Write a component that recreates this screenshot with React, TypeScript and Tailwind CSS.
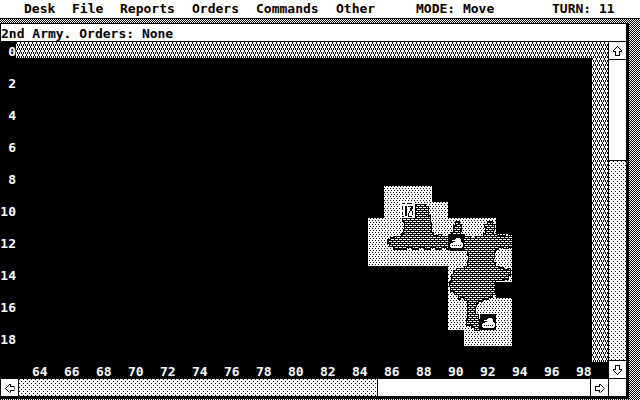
const mono = "font-['DejaVu_Sans_Mono','Liberation_Mono',monospace] text-[13px] font-bold";

const checker = "bg-[conic-gradient(#000_25%,#fff_0_50%,#000_0_75%,#fff_0)] bg-[length:2px_2px]";
const dots =
  "bg-white bg-[image:conic-gradient(from_270deg_at_1px_1px,#000_90deg,transparent_0),conic-gradient(from_270deg_at_1px_1px,#000_90deg,transparent_0)] bg-[size:4px_4px] bg-[position:0_0,2px_2px]";
const mesh =
  "bg-white bg-[image:conic-gradient(from_270deg_at_1px_2px,#000_90deg,transparent_0),conic-gradient(from_270deg_at_1px_2px,#000_90deg,transparent_0),conic-gradient(from_270deg_at_1px_2px,#000_90deg,transparent_0),conic-gradient(from_270deg_at_1px_2px,#000_90deg,transparent_0)] bg-[size:4px_8px,4px_8px,4px_4px,4px_4px] bg-[position:0_0,2px_4px,1px_2px,3px_2px]";

const menus = [
  { name: "Desk", width: "w-8" },
  { name: "File", width: "w-8" },
  { name: "Reports", width: "w-14" },
  { name: "Orders", width: "w-12" },
  { name: "Commands", width: "w-16" },
  { name: "Other", width: "w-10" },
];

const rows = Array.from({ length: 10 }, (_, i) => i * 2);
const columns = Array.from({ length: 18 }, (_, i) => 64 + i * 2);

function Arrow({ turn }: { turn: string }) {
  return (
    <svg viewBox="0 0 9 10" className={`h-[10px] w-[9px] ${turn}`} shapeRendering="crispEdges" aria-hidden="true">
      <path
        d="M4 0h1v1h-1zM3 1h1v1h-1zM5 1h1v1h-1zM2 2h1v1h-1zM6 2h1v1h-1zM1 3h1v1h-1zM7 3h1v1h-1zM0 4h1v1h-1zM8 4h1v1h-1zM0 5h3v1h-3zM6 5h3v1h-3zM2 6h1v3h-1zM6 6h1v3h-1zM2 9h5v1h-5z"
        fill="#000"
      />
    </svg>
  );
}

function ArrowButton({ label, turn = "" }: { label: string; turn?: string }) {
  return (
    <button type="button" aria-label={label} className="flex size-[17px] shrink-0 items-center justify-center bg-white">
      <Arrow turn={turn} />
    </button>
  );
}

function Tank({ x, y }: { x: number; y: number }) {
  return (
    <g transform={`translate(${x} ${y})`}>
      <rect width="16" height="16" fill="#000" />
      <path d="M8 4h4v1h1v3h1v1h1v4h-1v1H3v-1H2v-3h1V9h2V8h2V7H4V6h3V5h1z" fill="#fff" />
      <path d="M4 11h1v1h-1zM6 11h1v1h-1zM8 11h1v1h-1zM10 11h1v1h-1zM12 11h1v1h-1z" fill="#000" />
    </g>
  );
}

function TerrainMap() {
  return (
    <svg viewBox="368 186 144 160" className="h-40 w-36" shapeRendering="crispEdges" role="img" aria-label="Explored terrain">
      <defs>
        <pattern id="plain" width="3" height="4" patternUnits="userSpaceOnUse">
          <rect width="3" height="4" fill="#fff" />
          <path d="M0 0h1v1h-1zM1 2h1v1h-1z" />
        </pattern>
        <pattern id="rough" width="4" height="4" patternUnits="userSpaceOnUse">
          <rect width="4" height="4" />
          <path d="M1 1h3v1h-3zM0 3h2v1h-2zM3 3h1v1h-1z" fill="#fff" />
        </pattern>
      </defs>
      <path
        d="M384 186H432V202H448V218H496V234H512V282H496V298H512V346H464V330H448V266H368V218H384Z"
        fill="url(#plain)"
      />
      <path
        d="M415 204H425V206H428V215H430V222H431V232H433V235H438V234H441V236H448V235H451V232H453V225H455V221H459V224H461V231H460V234H464V236H470V238H475V236H483V233H485V227H484V224H487V221H492V224H494V230H493V234H497V235H505V236H508V234H512V247H508V248H503V247H498V249H495V252H494V258H493V262H495V266H499V267H503V269H507V268H510V275H508V279H503V280H495V294H492V297H488V299H482V301H478V303H476V306H475V314H478V319H479V330H474V327H471V325H466V319H467V300H464V297H460V299H458V294H454V291H450V286H449V281H451V274H453V270H456V268H464V266H467V260H468V255H467V250H450V249H446V247H441V249H435V247H430V249H424V247H418V249H412V247H406V249H397V249H393V246H389V243H387V239H390V237H394V236H401V233H403V229H404V221H402V218H415Z"
        fill="url(#rough)"
        stroke="#000"
        strokeWidth="1"
      />
      <rect x="400" y="202" width="15" height="16" fill="#fff" />
      <path d="M402 203h3v1h-3zM407 203h5v1h-5zM402 206h1v4h-1zM402 212h1v3h-1zM405 206h2v10h-2zM408 206h4v1h-4zM411 206h2v3h-2zM410 208h2v3h-2zM409 211h1v2h-1zM408 213h1v3h-1zM412 211h1v4h-1zM402 216h2v1h-2zM408 216h4v1h-4z" />
      <Tank x={448} y={234} />
      <Tank x={480} y={314} />
    </svg>
  );
}

export default function App() {
  return (
    <div className={`flex h-screen flex-col ${checker} ${mono} text-black`}>
      <header className="flex h-[19px] shrink-0 items-center border-b border-black bg-white px-6 leading-4">
        <nav className="flex gap-4" aria-label="Main menu">
          {menus.map((menu) => (
            <button key={menu.name} type="button" className={`${menu.width} text-left whitespace-nowrap`}>
              {menu.name}
            </button>
          ))}
        </nav>
        <span className="ml-10 whitespace-nowrap">MODE: Move</span>
        <span className="ml-auto w-16 whitespace-nowrap">TURN: 11</span>
      </header>

      <main className="mt-1 mr-[11px] mb-px flex min-h-0 flex-1 flex-col border-t border-r-[3px] border-b-[3px] border-l border-black bg-white">
        <h1 className="h-[18px] shrink-0 border-b border-black leading-[19px] whitespace-nowrap">2nd Army. Orders: None</h1>

        <div className="flex min-h-0 flex-1">
          <section className="grid min-w-0 flex-1 grid-cols-[15px_1fr_16px] grid-rows-[16px_1fr_16px] bg-black leading-4 text-white">
            <div className="row-span-3 flex flex-col gap-4">
              {rows.map((row) => (
                <span key={row} className="flex h-4 items-center justify-end pt-1 whitespace-nowrap">
                  {row}
                </span>
              ))}
            </div>
            <div className={`col-span-2 ${mesh}`} />
            <div className="flex items-end justify-end pr-20 pb-4">
              <TerrainMap />
            </div>
            <div className={mesh} />
            <div className="col-span-2 flex justify-end gap-4 pr-4">
              {columns.map((column) => (
                <span key={column} className="w-4 pt-0.5 whitespace-nowrap">
                  {column}
                </span>
              ))}
            </div>
          </section>

          <div className="flex w-[18px] shrink-0 flex-col border-l border-black">
            <ArrowButton label="Scroll up" />
            <button type="button" aria-label="Vertical position" className="flex-[101] border-y border-black bg-white" />
            <div className={`flex-[200] border-b border-black ${dots}`} />
            <ArrowButton label="Scroll down" turn="rotate-180" />
          </div>
        </div>

        <div className="flex h-[18px] shrink-0 border-t border-black">
          <ArrowButton label="Scroll left" turn="-rotate-90" />
          <div className={`flex-[360] border-l border-black ${dots}`} />
          <button type="button" aria-label="Horizontal position" className="flex-[213] border-x border-black bg-white" />
          <ArrowButton label="Scroll right" turn="rotate-90" />
          <div className="w-[18px] border-l border-black bg-white" />
        </div>
      </main>
    </div>
  );
}
